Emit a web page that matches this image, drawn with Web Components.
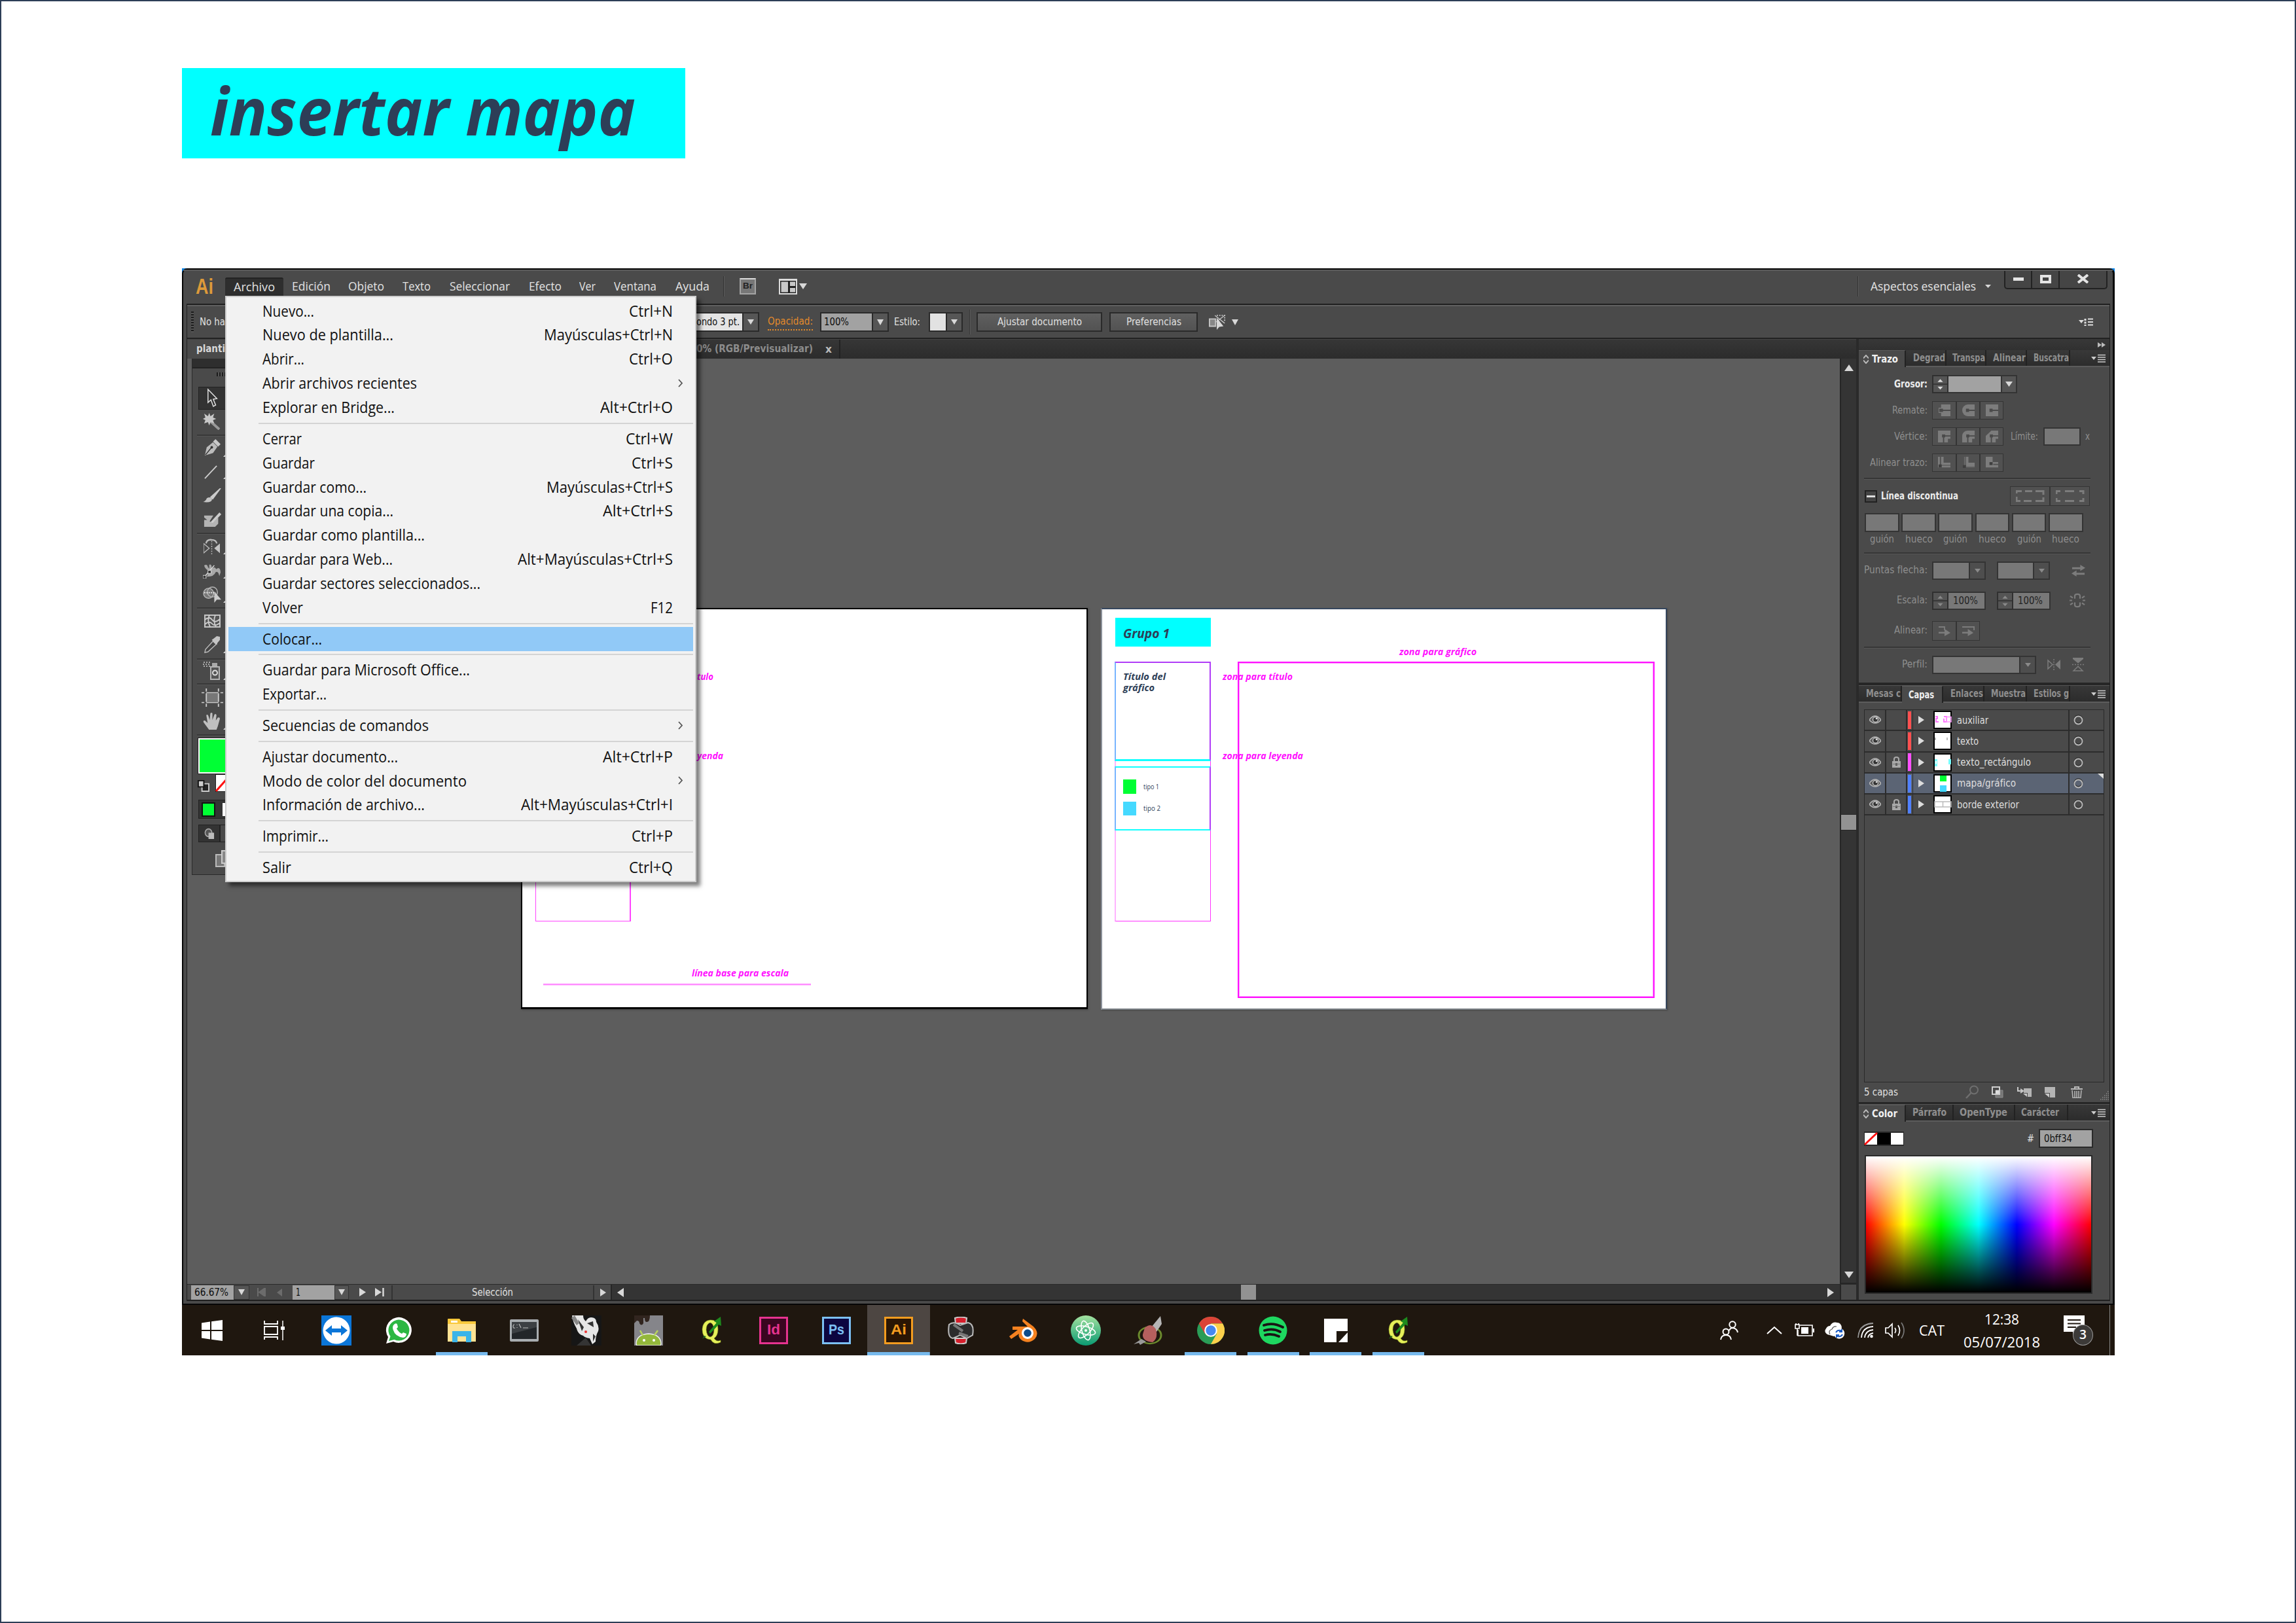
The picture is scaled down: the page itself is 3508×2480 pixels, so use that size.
<!DOCTYPE html>
<html lang="es">
<head>
<meta charset="utf-8">
<title>insertar mapa</title>
<style>
html,body{margin:0;padding:0;background:#fff}
body{width:3508px;height:2480px;overflow:hidden;font-family:"DejaVu Sans","Liberation Sans",sans-serif}
</style>
</head>
<body>
<page-sheet></page-sheet>
<script>
const def=(name,css,html,after)=>customElements.define(name,class extends HTMLElement{
  constructor(){super();this.attachShadow({mode:'open'});}
  connectedCallback(){
    if(this.done)return;this.done=true;
    this.shadowRoot.innerHTML='<style>*{box-sizing:border-box}:host{box-sizing:border-box;display:block}'+css+'</style>'+(typeof html==='function'?html(this):html);
    if(after)after(this);
  }
});

/* One line of text, condensed or expanded to the width in "w". */
def('t-x',':host{display:inline-block;white-space:pre;line-height:1.2;flex:none}span{display:inline-block;transform-origin:0 50%}','<span><slot></slot></span>',el=>{
  const w=+el.getAttribute('w'),s=el.shadowRoot.querySelector('span');
  if(el.hasAttribute('s'))el.style.fontSize=el.getAttribute('s')+'px';
  if(w){const m=s.getBoundingClientRect().width;if(m){el.style.width=w+'px';s.style.transform='scaleX('+(w/m)+')';}}
});

const dn='<path d="M0 0H12L6 9Z" fill="#d8d8d8"/>';
const I={
down:['0 0 12 9',dn],downdim:['0 0 12 9','<path d="M0 0H12L6 9Z" fill="#8a8a8a"/>'],
up:['0 0 14 10','<path d="M0 10H14L7 0Z" fill="#d8d8d8"/>'],
right:['0 0 10 14','<path d="M0 0V14L10 7Z" fill="#d8d8d8"/>'],
left:['0 0 10 14','<path d="M10 0V14L0 7Z" fill="#d8d8d8"/>'],
leftdim:['0 0 10 14','<path d="M10 0V14L0 7Z" fill="#6c6c6c"/>'],
first:['0 0 14 14','<path d="M2 0V14M13 0V14L4 7Z" stroke="#6c6c6c" stroke-width="2" fill="#6c6c6c"/>'],
last:['0 0 14 14','<path d="M12.500 0V14" stroke="#d8d8d8" stroke-width="2.500"/><path d="M0 0V14L10 7Z" fill="#d8d8d8"/>'],
layout:['0 0 28 24','<path d="M0 0H28V24H0Z" fill="#dcdcdc"/><path d="M2 3H26V22H2Z" fill="#222"/><path d="M3.500 4.500H14V20.500H3.500ZM17 4.500H25V11H17ZM17 14H25V20.500H17Z" fill="#c8c8c8"/>'],
snap:['0 0 28 25','<path d="M1 7H11V19H1Z" fill="#888" stroke="#c4c4c4" stroke-width="2"/><path d="M13 1H26V11" fill="none" stroke="#c4c4c4" stroke-width="2" stroke-dasharray="2 2"/><path d="M10 1L26 14M26 1L12 12" stroke="#c4c4c4" stroke-width="1.500"/><path d="M13 5V25L17 20L24 19Z" fill="#d8d8d8"/>'],
optm:['0 0 22 12','<path d="M0 3H8L4 8Z" fill="#ddd"/><path d="M10 1V12" stroke="#ddd" stroke-width="3" stroke-dasharray="3 1.500"/><path d="M14 1.500H22M14 6H22M14 10.500H22" stroke="#ddd" stroke-width="2"/>'],
menu:['0 0 22 13','<path d="M0 4H8L4 9Z" fill="#ccc"/><path d="M10 1.500H22M10 5H22M10 8.500H22M10 12H22" stroke="#ccc" stroke-width="1.500"/>'],
ffwd:['0 0 12 8','<path d="M0 0V8L6 4ZM6 0V8L12 4Z" fill="#bbb"/>'],
updn:['0 0 9 14','<path d="M0 5.500L4.500 1L9 5.500M0 8.500L4.500 13L9 8.500" fill="none" stroke="#bbb" stroke-width="2"/>'],
step:['0 0 23 26','<path d="M0 13H23" stroke="#2c2c2c" stroke-width="1.500"/><path d="M7 9.500H16L11.500 4.500ZM7 17H16L11.500 22Z" fill="#dcdcdc"/>'],
stepd:['0 0 23 26','<path d="M0 13H23" stroke="#2c2c2c" stroke-width="1.500"/><path d="M7 9.500H16L11.500 4.500ZM7 17H16L11.500 22Z" fill="#8a8a8a"/>'],
cap1:['0 0 20 18','<path d="M5 0H20V18H5V13H1V5H5Z" fill="#7c7c7c"/><path d="M3 9H20" stroke="#4a4a4a" stroke-width="2"/><path d="M2 6.500H8V11.500H2Z" fill="#4a4a4a"/>'],
cap2:['0 0 20 18','<path d="M9 0H20V18H9A9 9 0 0 1 9 0Z" fill="#7c7c7c"/><path d="M9 9H20" stroke="#4a4a4a" stroke-width="2"/><path d="M6 6.500H11V11.500H6Z" fill="#4a4a4a"/>'],
cap3:['0 0 20 18','<path d="M0 0H20V18H0Z" fill="#7c7c7c"/><path d="M9 9H20" stroke="#4a4a4a" stroke-width="2"/><path d="M6 6.500H11V11.500H6Z" fill="#4a4a4a"/>'],
ver1:['0 0 20 20','<path d="M0 0H20V14H16V20H0Z" fill="#7c7c7c"/><path d="M9 20V9H20" fill="none" stroke="#4a4a4a" stroke-width="2"/><path d="M6.500 6.500H11.500V11.500H6.500Z" fill="#4a4a4a"/>'],
ver2:['0 0 20 20','<path d="M9 0H20V14H16V20H0V9A9 9 0 0 1 9 0Z" fill="#7c7c7c"/><path d="M9 20V9H20" fill="none" stroke="#4a4a4a" stroke-width="2"/><path d="M6.500 6.500H11.500V11.500H6.500Z" fill="#4a4a4a"/>'],
ver3:['0 0 20 20','<path d="M9 0H20V14H16V20H0V9Z" fill="#7c7c7c"/><path d="M9 20V9H20" fill="none" stroke="#4a4a4a" stroke-width="2"/><path d="M6.500 6.500H11.500V11.500H6.500Z" fill="#4a4a4a"/>'],
ali1:['0 0 20 20','<path d="M0 0H3V15H20V18H0ZM5 0H9V10H20V14H5Z" fill="#7c7c7c"/><path d="M1 13H6V18H1Z" fill="#3f3f3f"/>'],
ali2:['0 0 20 20','<path d="M6 0H10V10H20V17H6Z" fill="#7c7c7c"/><path d="M4 0V17H20" fill="none" stroke="#6a6a6a" stroke-width="2"/><path d="M1 14H6V19H1Z" fill="#3f3f3f"/>'],
ali3:['0 0 20 20','<path d="M0 0H11V9H20V12H12V14H20V18H0Z" fill="#7c7c7c"/><path d="M6 9H11V14H6Z" fill="#3f3f3f"/>'],
dash1:['0 0 44 18','<path d="M9 1.500H1V5M1 10V16.500H7M14 1.500H25M30 1.500H42V7M42 11V16.500H30M12 16.500H24" fill="none" stroke="#7c7c7c" stroke-width="3"/>'],
dash2:['0 0 44 18','<path d="M7 1.500H1V6M1 12V16.500H7M14 1.500H28M36 1.500H42V6M42 12V16.500H36M14 16.500H28" fill="none" stroke="#7c7c7c" stroke-width="3"/>'],
swap:['0 0 22 19','<path d="M1 4H14V0L22 5L14 10V7H1ZM21 13H8V9L0 14L8 19V16H21Z" fill="#7c7c7c"/>'],
link:['0 0 24 24','<path d="M8 9V5Q8 2 12 2Q16 2 16 5V9M8 15V19Q8 22 12 22Q16 22 16 19V15M1 5L5 8M0 12H4M1 19L5 16M23 5L19 8M24 12H20M23 19L19 16" fill="none" stroke="#7c7c7c" stroke-width="2.200"/>'],
ar1:['0 0 20 16','<path d="M0 2H10V7" fill="none" stroke="#7c7c7c" stroke-width="2"/><path d="M0 9.500H10V5L20 11L10 16V12H0Z" fill="#7c7c7c"/>'],
ar2:['0 0 20 16','<path d="M0 2H19V7" fill="none" stroke="#7c7c7c" stroke-width="2"/><path d="M0 9.500H9V5L18 11L9 16V12H0Z" fill="#7c7c7c"/>'],
flh:['0 0 20 18','<path d="M1 2V16L8 9Z" fill="none" stroke="#7c7c7c" stroke-width="1.500"/><path d="M10 0V18" stroke="#7c7c7c" stroke-width="1.500" stroke-dasharray="2 2"/><path d="M20 1V17L12 9Z" fill="#7c7c7c"/>'],
flv:['0 0 18 22','<path d="M1 0H17V2L9 9L1 2Z" fill="#7c7c7c"/><path d="M0 11H18" stroke="#7c7c7c" stroke-width="1.500" stroke-dasharray="2 2"/><path d="M2 21H16L9 14Z" fill="none" stroke="#7c7c7c" stroke-width="1.500"/>'],
eye:['0 0 18 14','<path d="M0 8Q9 -4 18 8Q9 18 0 8Z" fill="#5a5a5a" stroke="#b4b4b4" stroke-width="1.600"/><circle cx="9.500" cy="7.500" r="4" fill="#333" stroke="#c4c4c4" stroke-width="1.400"/><circle cx="11" cy="6" r="1.300" fill="#ddd"/>'],
lock:['0 0 13 17','<path d="M3 8V4Q3 1 6.500 1Q10 1 10 4V8" fill="none" stroke="#aaa" stroke-width="2"/><path d="M0 7H13V17H0Z" fill="#a8a8a8"/><path d="M5 10H8V14H5Z" fill="#555"/><path d="M1 11.500H12" stroke="#777"/>'],
tri:['0 0 9 12','<path d="M0 0V12L9 6Z" fill="#dcdcdc"/>'],
ring:['0 0 15 16','<circle cx="7.500" cy="7.300" r="6" fill="none" stroke="#2c2c2c" stroke-width="2"/><circle cx="7.500" cy="8.500" r="6" fill="none" stroke="#b8b8b8" stroke-width="1.900"/>'],
find:['0 0 20 21','<circle cx="13" cy="7.500" r="6" fill="none" stroke="#6f6f6f" stroke-width="2"/><path d="M8.500 12L1 20" stroke="#6f6f6f" stroke-width="2.500"/>'],
mask:['0 0 18 18','<path d="M6 6H17V17H6Z" fill="#777" stroke="#8c8c8c"/><path d="M1 1H12V12H1Z" fill="none" stroke="#cfcfcf" stroke-width="2"/><path d="M6 6H11V11H6Z" fill="#ddd"/>'],
subl:['0 0 22 16','<path d="M1 0V6H8M5 3L9 6L5 9" fill="none" stroke="#c8c8c8" stroke-width="2"/><path d="M10 2H22V15H16V9H10Z" fill="#b4b4b4"/><path d="M9 10L15 15V10Z" fill="#c8c8c8"/>'],
newl:['0 0 16 17','<path d="M0 1H16V17H8V10H0Z" fill="#b4b4b4"/><path d="M0 11H7V17Z" fill="#c8c8c8"/>'],
trash:['0 0 18 18','<path d="M0 4H18M6 3V1H12V3" fill="none" stroke="#b8b8b8" stroke-width="2"/><path d="M2 6L3 17.500H15L16 6M6 7V17M9 7V17M12 7V17" fill="none" stroke="#b8b8b8" stroke-width="1.500"/>'],
grip:['0 0 14 15','<path d="M1 14H14M4 11H14M7 8H14M10 5H14M12 2H14" stroke="#888" stroke-width="1.500" stroke-dasharray="1.500 1.500"/>'],
/* tools */
sel:['0 0 20 30','<path d="M2 2V22L7 18L11 28L15 26L11 17L17 16Z" fill="#333" stroke="#e4e4e4" stroke-width="1.600"/>'],
wand:['0 0 28 26','<path d="M11 12L26 25" stroke="#999" stroke-width="4"/><path d="M10 0L12 5L18 1L16 7L21 9L16 11L18 16L12 14L10 19L8 14L2 16L4 11L0 9L4 7L2 1L8 5Z" fill="#c9c9c9"/>'],
pen:['0 0 28 28','<path d="M2 26L5 13L15 5L22 12L15 22Z" fill="#bbb"/><path d="M15 4L19 0L27 8L23 12Z" fill="#c9c9c9"/><path d="M3 25L12 14" stroke="#333" stroke-width="1.500"/><circle cx="13" cy="13" r="2" fill="#333"/>'],
line:['0 0 22 22','<path d="M1 21L20 1" stroke="#ccc" stroke-width="2"/>'],
brush:['0 0 28 24','<path d="M12 14L27 0L15 17Z" fill="#ccc" stroke="#ccc" stroke-width="1.500"/><path d="M0 22Q4 21 6 16Q11 13 14 17Q14 24 0 22Z" fill="#c4c4c4"/>'],
blob:['0 0 30 24','<path d="M1 5H16L10 14L14 17L24 8V18L19 23H1V12H6L1 8Z" fill="#b4b4b4"/><path d="M11 16L26 0L29 3L15 17Z" fill="#ccc"/>'],
refl:['0 0 26 26','<path d="M0 8V24L9 16Z" fill="none" stroke="#bbb" stroke-width="1.500"/><path d="M26 8V24L17 16Z" fill="#c4c4c4"/><path d="M13 4V26" stroke="#bbb" stroke-width="1.500" stroke-dasharray="2 2"/><path d="M4 8Q5 1 13 2Q20 2 21 8" fill="none" stroke="#bbb" stroke-width="2.500"/>'],
pup:['0 0 30 24','<path d="M2 3Q7 0 8 6L10 8V2Q14 0 14 8Q19 4 21 9Q27 4 28 14L26 20Q24 11 20 14Q18 21 6 21Q9 16 8 11Q3 8 2 3Z" fill="#a8a8a8"/><path d="M2 22L18 3" stroke="#ddd" stroke-width="1.500"/><path d="M8 11H13V16H8ZM0 19H5V24H0Z" fill="#333" stroke="#ddd"/>'],
shp:['0 0 30 26','<circle cx="9" cy="11" r="8" fill="#777" stroke="#b4b4b4" stroke-width="1.500"/><circle cx="15" cy="9" r="8" fill="none" stroke="#b4b4b4" stroke-width="1.500"/><path d="M2 10H20" stroke="#eee" stroke-width="2" stroke-dasharray="2 1.500"/><path d="M18 8V26L22 21H29Z" fill="#ccc"/>'],
mesh:['0 0 25 20','<path d="M1 1H24V19H1Z" fill="#555" stroke="#c4c4c4" stroke-width="2"/><path d="M1 8Q8 2 12 8T24 7M1 15Q8 9 12 14T24 13M8 1Q4 9 9 19M17 1Q13 10 18 19" fill="none" stroke="#ccc" stroke-width="1.800"/>'],
drop:['0 0 26 27','<path d="M14 8L19 13L6 25L1 26L2 21Z" fill="#444" stroke="#bbb" stroke-width="1.500"/><path d="M12 6L15 4L20 0L25 1L25 6L21 11L20 14Z" fill="#c4c4c4"/>'],
spray:['0 0 26 28','<path d="M12 8H25V27H12Z" fill="#555" stroke="#b4b4b4" stroke-width="2"/><path d="M14 2H22V7H14Z" fill="#aaa"/><circle cx="18.500" cy="17" r="3.500" fill="none" stroke="#ddd" stroke-width="2"/><path d="M1 1H12M0 4H12M1 7H11" stroke="#ccc" stroke-width="1.500" stroke-dasharray="2 2"/>'],
artb:['0 0 32 30','<path d="M7 8H25V22H7Z" fill="#777"/><path d="M7 0V5M7 8V22M7 25V30M25 0V5M25 8V22M25 25V30M0 7H4M7 7H25M28 7H32M0 23H4M7 23H25M28 23H32" stroke="#ccc" stroke-width="1.800"/>'],
hand:['0 0 26 28','<path d="M9 28L1 16Q0 12 3 13L7 17L5 4Q7 2 8 5L10 12L11 1Q13 -1 14 1V12L17 3Q19 1 20 4L19 13L22 8Q25 7 25 10L22 22L20 28Z" fill="#c0c0c0"/>'],
defs:['0 0 20 20','<path d="M8 7H19V19H8Z" fill="#222" stroke="#ccc" stroke-width="2"/><path d="M2 2H11V12H2Z" fill="#ccc" stroke="#111" stroke-width="2"/>'],
mode:['0 0 17 16','<circle cx="7" cy="7" r="5.500" fill="#555" stroke="#aaa" stroke-width="1.600"/><path d="M7 7H16V16H7Z" fill="#bbb"/>'],
scr:['0 0 22 26','<path d="M1 7H14V25H1Z" fill="#777" stroke="#bbb" stroke-width="2"/><path d="M10 1H22V20H10Z" fill="#888" stroke="#ccc" stroke-width="2"/>'],
/* taskbar */
win:['0 0 32 32','<path d="M0 4.500L13 2.500V15H0ZM15 2.200L32 0V15H15ZM0 17H13V29.500L0 27.500ZM15 17H32V32L15 29.800Z" fill="#fff"/>'],
tv:['0 0 32 30','<path d="M1 0V5H21V0M1 29V25H21V29M1 9H21V21H1Z" fill="none" stroke="#fff" stroke-width="1.800"/><path d="M29 0V30" stroke="#fff" stroke-width="1.500"/><path d="M26 9H32V14H26Z" fill="#fff"/>'],
team:['0 0 46 46','<path d="M0 0H46V46H0Z" fill="#0b76d8"/><circle cx="23" cy="23" r="20.500" fill="#fff"/><path d="M6 23L16 15V20H30V15L40 23L30 31V26H16V31Z" fill="#0b76d8"/>'],
wa:['0 0 42 42','<path d="M1 41L4 31A19.500 19.500 0 1 1 12 38Z" fill="#fff"/><path d="M5 37L7.500 30A16 16 0 1 1 13.500 35Z" fill="#2cb742"/><path d="M14 11Q17 9 18 12L19 16L17 18Q20 24 25 26L27 24L32 26Q32 31 27 32Q13 30 11 17Q11 13 14 11Z" fill="#fff"/>'],
fold:['0 0 43 36','<path d="M0 1Q0 0 1 0H18L21 4H43V35H0Z" fill="#f9c83c"/><path d="M0 8H43V35H0Z" fill="#ffe394"/><path d="M5 3H15V6H5Z" fill="#fff"/><path d="M7 36V19H36V36H28V27H15V36Z" fill="#3cb4e8"/>'],
cmd:['0 0 44 34','<rect width="44" height="34" rx="2" fill="#a8adb0"/><path d="M3 4H41V30H3Z" fill="#222629"/><path d="M3 4H41V12L3 22Z" fill="#3c4043"/><path d="M7 8Q5 8 5 11Q5 14 8 13M11 8V9M11 12V13M14 7L17 13M20 13H28" stroke="#bbb" fill="none" stroke-width="1.200"/>'],
rhino:['0 0 46 46','<path d="M0 0H46V46H0Z" fill="#161616"/><path d="M1 0H18Q18 6 22 9Q25 3 30 3Q38 3 38 10Q43 17 41 24Q37 31 37 40L32 44L28 35Q21 34 18 31Q10 29 8 20Q2 10 1 0Z" fill="#e6e6e6"/><path d="M10 6L19 18L16 24ZM24 12L33 9L34 18ZM33 28L37 32L33 40Z" fill="#333"/><path d="M5 0L12 12L8 15L0 4Z" fill="#888"/><circle cx="22" cy="25" r="2" fill="#e33"/><path d="M8 46L22 34L30 46Z" fill="#343434"/>'],
droid:['0 0 44 46','<path d="M0 0H44V46H0Z" fill="#85858a"/><path d="M0 0H24Q24 10 19 10Q16 10 16 4H14V12Q11 17 8 12Q8 8 4 8L0 12Z" fill="#31251f"/><path d="M3 44Q3 29 22 28Q41 29 41 44L40 46H4Z" fill="#94b83b" stroke="#eee" stroke-width="1.500"/><path d="M13 30L9 23M31 30L36 23" stroke="#b6d35a" stroke-width="2.500"/><circle cx="15" cy="38" r="2" fill="#fff"/><circle cx="30" cy="38" r="2" fill="#fff"/>'],
qgis:['0 0 38 42','<path d="M17 5Q29 4 29 19Q29 29 23 33Q27 39 33 36L33 39Q23 44 18 35Q5 34 5 19Q6 6 17 5ZM17 9Q11 11 11 20Q12 30 17 31Q23 30 23 19Q22 10 17 9Z" fill="#e6f05a" fill-rule="evenodd" stroke="#8a9a20" stroke-width=".6"/><path d="M33 0L34 14L30 12L17 26L15 23L27 9L23 7Z" fill="#1d8a1d"/><path d="M11 30L5 34L8 29Z" fill="#1d6a1d"/>'],
nx:['0 0 42 42','<path d="M12 2Q21 -1 30 2L29 10H13ZM12 33H30L29 40Q21 43 13 40Z" fill="#d61f2c" stroke="#ccc" stroke-width="2"/><path d="M3 12Q10 6 20 13L32 9Q42 11 39 28L30 33L20 28L9 33Q0 32 3 12Z" fill="#2c2c2c" stroke="#bbb" stroke-width="2"/><path d="M10 12L24 22M18 25L32 30" stroke="#777" stroke-width="4"/>'],
blend:['0 0 44 38','<path d="M21 1L37 13Q47 23 39 32Q29 41 18 33Q13 28 15 24L3 32L0 28L13 18H5V13H20L28 13L20 5Z" fill="#f58220"/><circle cx="28" cy="23" r="9" fill="#fff"/><circle cx="28" cy="23" r="5.800" fill="#0b4c8c"/>'],
atom:['0 0 46 46','<defs><linearGradient id="g" x2="0" y2="1"><stop stop-color="#a4e2a0"/><stop offset="1" stop-color="#0a9b72"/></linearGradient></defs><circle cx="23" cy="23" r="23" fill="url(#g)"/><g fill="none" stroke="#fff" stroke-width="1.600"><ellipse cx="23" cy="23" rx="15" ry="6" transform="rotate(15 23 23)"/><ellipse cx="23" cy="23" rx="15" ry="6" transform="rotate(75 23 23)"/><ellipse cx="23" cy="23" rx="15" ry="6" transform="rotate(135 23 23)"/></g><circle cx="23" cy="23" r="2" fill="#fff"/>'],
bird:['0 0 46 44','<circle cx="25" cy="29" r="17" fill="none" stroke="#6b8a2d" stroke-width="3" transform="scale(1 .75) translate(0 10)"/><path d="M41 0L43 12L35 24L27 17Z" fill="#b5b5b5"/><path d="M17 18Q27 9 34 20Q38 34 29 40Q13 38 14 28Z" fill="#b5605e"/><path d="M0 43L12 35L19 39L10 44L8 41Z" fill="#999"/>'],
chrome:['0 0 42 42','<circle cx="21" cy="21" r="21" fill="#2a9d57"/><path d="M2.800 10.500A21 21 0 0 1 39.200 10.500H21L12 26Z" fill="#db4437"/><path d="M39.200 10.500A21 21 0 0 1 21 42L30 26L21 10.500Z" fill="#fcd04b"/><circle cx="21" cy="21" r="9.800" fill="#fff"/><circle cx="21" cy="21" r="7.700" fill="#4688f1"/>'],
spot:['0 0 44 44','<circle cx="22" cy="22" r="21.500" fill="#1ed760"/><path d="M8 14Q22 9 37 17M9 22Q22 18 33 24M10 29Q20 26 31 31" fill="none" stroke="#191414" stroke-width="3.800" stroke-linecap="round"/>'],
note:['0 0 36 36','<path d="M0 0H36V19H19V36H0Z" fill="#fff"/><path d="M22 36L36 21V36Z" fill="#fff"/>'],
ppl:['0 0 28 30','<g fill="none" stroke="#fff" stroke-width="2"><circle cx="9" cy="17" r="4.500"/><path d="M1 29Q2 22 9 22T17 29"/><circle cx="19" cy="6" r="4.700"/><path d="M14 15Q16 11 19 11Q26 12 27 18"/></g>'],
chev:['0 0 24 13','<path d="M1 12L12 2L23 12" fill="none" stroke="#fff" stroke-width="2"/>'],
batt:['0 0 30 21','<path d="M8 3H27V19H5V10" fill="none" stroke="#fff" stroke-width="1.600"/><path d="M10 6H21V16H10Z" fill="#fff"/><path d="M28 8H30V14H28Z" fill="#fff"/><path d="M1 2H7V8H1ZM2 0V3M6 0V3M4 8V19" stroke="#fff" stroke-width="1.600" fill="none"/>'],
cloud:['0 0 32 26','<path d="M4 19Q-2 15 2 10Q4 6 8 6Q12 -1 19 1Q25 1 26 9L14 22Z" fill="#fff"/><path d="M8 19Q5 13 11 11Q13 6 18 7" fill="none" stroke="#555" stroke-width="1.200"/><circle cx="22" cy="17.500" r="8.200" fill="#fff"/><path d="M17 16Q19 12 24 13L26 15M27 19Q25 23 20 22L18 20M26 11V15H22M18 24V20H22" fill="none" stroke="#1b5cc4" stroke-width="2"/>'],
wifi:['0 0 25 24','<g fill="none" stroke="#fff" stroke-width="1.800"><path d="M1 23Q2 2 24 1" stroke="#999"/><path d="M6 23Q7 7 24 6"/><path d="M11 23Q12 12 24 11"/><path d="M16 23Q17 17 24 16"/></g><circle cx="21.500" cy="21" r="2.300" fill="#fff"/>'],
vol:['0 0 30 26','<path d="M1 9H5L11 3V23L5 17H1Z" fill="none" stroke="#fff" stroke-width="1.700"/><path d="M15 9Q18 13 15 17M20 5Q25 13 20 21" fill="none" stroke="#fff" stroke-width="1.700"/><path d="M25 1Q33 13 25 25" fill="none" stroke="#777" stroke-width="1.700"/>'],
noti:['0 0 32 30','<path d="M0 0H32V25H19L14 30V25H0Z" fill="#fff"/><path d="M6 7H26M6 12.500H26M6 18H19" stroke="#1f170f" stroke-width="2"/>']
};
def('i-c',':host{display:inline-flex;flex:none}svg{display:block}',el=>{
  const n=el.getAttribute('n'),d=I[n],v=d[0].split(' ');
  const w=el.getAttribute('w')||v[2],h=el.getAttribute('h')||v[3];
  return `<svg width="${w}" height="${h}" viewBox="${d[0]}" preserveAspectRatio="none">${d[1]}</svg>`;
});

/* ---------- menu bar ---------- */
const gap=n=>`<div style="width:${n}px;flex:none"></div>`;
const menus=[['Edición',446,505],['Objeto',532,587],['Texto',615,658],['Seleccionar',687,779],['Efecto',808,858],['Ver',885,910],['Ventana',938,1003],['Ayuda',1032,1084]];
def('menu-bar',`:host{display:flex;height:52px;align-items:center;color:#e2e2e2;font:19px "Open Sans","Noto Sans",sans-serif;border-top:2px solid #5c5c5c;padding-bottom:3px}
.ai{color:#dd9a3a;font:bold 33px "Liberation Sans",sans-serif;margin-left:19px}
.on{margin:3px 13px 0 18px;width:89px;height:30px;background:#2e2e2e;border-top:2px solid #222;border-radius:3px 3px 0 0;display:flex;justify-content:center;align-items:center;padding-bottom:3px}
.sep{width:2px;height:31px;background:#333;border-right:1px solid #5c5c5c}
.br{width:25px;height:25px;background:#777;border:2px solid #a4a4a4;border-top-color:#ddd;color:#222;font:bold 12px "Liberation Sans",sans-serif;display:flex;align-items:center;justify-content:center}
.btns{display:flex;align-self:flex-start;height:28px;border:2px solid #222;border-top:0;border-radius:0 0 5px 5px;background:#454545}
.btns div{display:flex;align-items:center;justify-content:center;border-right:2px solid #222;padding-bottom:2px}`,
()=>{let x=446,h='<t-x class="ai" w="27">Ai</t-x><div class="on"><t-x w="63">Archivo</t-x></div>';
 menus.forEach(([t,a,b])=>{h+=gap(a-x)+`<t-x w="${b-a}">${t}</t-x>`;x=b;});
 return h+gap(21)+'<div class="sep"></div>'+gap(23)+'<div class="br"><t-x w="15">Br</t-x></div>'+gap(35)+'<i-c n="layout"></i-c>'+gap(3)+'<i-c n="down" w="12" h="9"></i-c><div style="flex:1"></div><div class="sep"></div>'+gap(18)+'<t-x w="161" s="18">Aspectos esenciales</t-x>'+gap(14)+'<i-c n="down" w="9" h="5"></i-c>'+gap(20)+'<div class="btns"><div style="width:41px"><svg width="16" height="5"><path d="M0 0H16V5H0Z" fill="#e4e4e4"/></svg></div><div style="width:42px"><svg width="17" height="13"><path d="M2 2H15V11H2Z" fill="none" stroke="#e4e4e4" stroke-width="4"/></svg></div><div style="width:71px;border:0"><svg width="17" height="14"><path d="M1 1L16 13M16 1L1 13" stroke="#e4e4e4" stroke-width="4"/></svg></div></div>'+gap(8);});

/* ---------- control bar ---------- */
def('control-bar',`:host{display:flex;flex:none;height:50px;align-items:center;font-size:16px;color:#e0e0e0;border-top:2px solid #606060;background:#4a4a4a}
.grip{width:4px;height:32px;background:repeating-linear-gradient(#1c1c1c 0 2px,#555 2px 4px)}
.f{height:30px;border:2px solid #2a2a2a;display:flex;align-items:center;color:#0c0c0c;padding-left:4px;overflow:hidden}
.d{height:30px;border:2px solid #2a2a2a;border-left:0;background:#565656;display:flex;align-items:center;justify-content:center}
.b{height:30px;border:2px solid #2a2a2a;background:linear-gradient(#606060,#525252);display:flex;align-items:center;justify-content:center}
.op{color:#e48a2a;height:26px;margin-top:-4px;border-bottom:2px dotted #e48a2a;margin-bottom:-4px;display:flex;align-items:center}
.s{width:2px;height:38px;background:#383838;border-right:1px solid #5a5a5a}`,
gap(6)+'<div class="grip"></div>'+gap(9)+'<t-x w="39">No ha</t-x>'+gap(720)+'<div class="f" style="width:72px;background:#e4e4e4;padding:0;border-left:0"><t-x w="66">ondo 3 pt.</t-x></div><div class="d" style="width:24px"><i-c n="down" w="10" h="8"></i-c></div>'+gap(13)+'<div class="op"><t-x w="69">Opacidad:</t-x></div>'+gap(11)+'<div class="f" style="width:81px;background:#a2a2a2"><t-x w="38">100%</t-x></div><div class="d" style="width:24px"><i-c n="down" w="10" h="9"></i-c></div>'+gap(8)+'<t-x w="40">Estilo:</t-x>'+gap(13)+'<div class="f" style="width:28px;background:#e2e2e2"></div><div class="d" style="width:24px"><i-c n="down" w="10" h="8"></i-c></div>'+gap(10)+'<div class="s"></div>'+gap(9)+'<div class="b" style="width:192px"><t-x w="129">Ajustar documento</t-x></div>'+gap(11)+'<div class="b" style="width:135px"><t-x w="84">Preferencias</t-x></div>'+gap(17)+'<i-c n="snap" w="26" h="23"></i-c>'+gap(9)+'<i-c n="down" w="10" h="9"></i-c><div style="flex:1"></div><i-c n="optm"></i-c>'+gap(25));

/* ---------- document tabs ---------- */
def('doc-tabs',`:host{display:flex;flex:none;height:30px;align-items:center;background:linear-gradient(#363636,#2c2c2c);font-weight:bold;font-size:15.500px;color:#8c8c8c;border-top:1px solid #444}
.a{width:70px;height:29px;background:#4a4a4a;color:#d8d8d8;display:flex;align-items:center;padding-left:14px}
.e{width:2px;height:29px;background:#222}`,
'<div class="a"><t-x w="44">planti</t-x></div>'+gap(708)+'<t-x w="178">0% (RGB/Previsualizar)</t-x>'+gap(19)+'<t-x w="10" style="color:#bbb" s="16">x</t-x>'+gap(11)+'<div class="e"></div>');

/* ---------- artboards ---------- */
def('art-object',':host{position:absolute}','<slot></slot>',el=>{const[x,y,w,h]=el.getAttribute('r').split(',');el.style.left=x+'px';el.style.top=y+'px';if(w)el.style.width=w+'px';if(h)el.style.height=h+'px';});
/* a line of text on an artboard, centred on cy */
const at=(x,cy,w,s,t,c,f)=>`<art-object r="${x},${cy-s*.6}" style="font:${f||'italic bold'} ${s}px 'Open Sans','Noto Sans',sans-serif;color:${c||'#ff11ff'}"><t-x w="${w}">${t}</t-x></art-object>`;
const box=(x,y,x2,y2,st)=>`<art-object r="${x},${y},${x2-x},${y2-y}" style="${st}"></art-object>`;
def('canvas-area',`:host{position:relative;flex:1;background:#5d5d5d;overflow:hidden}`,
()=>{const X=v=>v-286,Y=v=>v-548;const T=(x,y,w,s,t,c,f)=>at(X(x),Y(y),w,s,t,c,f),B=(a,b,c,d,s)=>box(X(a),Y(b),X(c),Y(d),s);
return B(796,929,1662,1542,'background:#fff;border:2px solid #000;border-bottom-width:3px;box-shadow:1px 1px 3px #444')+
B(818,1300,964,1408,'border:2px solid #ff66ff;border-top:0;border-bottom-width:1px;border-left-width:1px;border-color:#ff44ff')+
T(1065,1032,25,14,'tulo')+T(1065,1153,40,14,'yenda')+T(1057,1485,148,14,'línea base para escala')+
B(830,1503,1239,1506,'background:#ff8cff;border-bottom:1px solid #ffc8ff')+
B(1682,929,2547,1543,'background:#fff;border:2px solid #36475e;border-left-color:#8a9098;border-bottom-color:#7c8288;box-shadow:1px 1px 2px #444')+
B(1704,944,1850,988,'background:#0ff')+T(1716,966,71,19,'Grupo 1','#2d3e57')+
B(1703,1011,1850,1408,'border:1px solid #ff33ff;border-left:2px solid #ffb4ff')+
B(1703,1011,1850,1163,'border:2px solid #b03cf8;border-left-color:#78b4ff;border-bottom:3px solid #1ff')+
B(1703,1171,1850,1269,'border:2px solid #1ff;border-right-color:#b03cf8;border-left-color:#78b4ff')+
T(1716,1032,65,14,'Título del','#2d3e57')+T(1716,1049,48,14,'gráfico','#2d3e57')+
B(1716,1191,1736,1213,'background:#00ff34')+B(1716,1225,1736,1246,'background:#45d9ff')+
T(1747,1201,24,11,'tipo 1','#2d3e57','normal')+T(1747,1234,26,11,'tipo 2','#2d3e57','normal')+
T(2138,994,118,14,'zona para gráfico')+
B(1891,1011,2528,1525,'border:2px solid #ff11ff;box-shadow:inset 0 0 0 1px #ff99ff')+
T(1868,1032,107,14,'zona para título')+T(1868,1153,123,14,'zona para leyenda')+
'<tools-panel></tools-panel>';});

/* ---------- tools ---------- */
const tools=[['sel',592,316,18,28],['wand',630,310,27,26],['pen',670,311,27,27],['line',710,312,21,21],['brush',745,310,28,23],['blob',782,311,28,23],['refl',822,311,25,24],['pup',860,310,29,23],['shp',895,310,29,25],['mesh',938,312,25,20],['drop',971,312,25,26],['spray',1010,310,26,28],['artb',1051,308,33,28],['hand',1088,310,27,26]];
const flyouts=['pen','line','refl','pup','shp','drop','spray','hand'];
def('tools-panel',`:host{position:absolute;left:7px;top:-5px;width:70px;height:794px;background:#4a4a4a;border:1px solid #2a2a2a;border-top:3px solid #3c3c3c}
.h{height:17px;background:#2e2e2e;border-bottom:2px solid #222}.g{margin:6px 0 0 37px;width:20px;height:6px;background:repeating-linear-gradient(90deg,#1c1c1c 0 2px,#555 2px 4px)}
.t{display:flex;align-items:flex-end}.t.on{background:#333;border:1px solid #222}
.s{height:3px;background:#383838;border-bottom:1px solid #555;margin-left:7px}
.row{display:flex}`,
()=>{let y=574,h='<div class="h"></div><div class="g"></div>';const sp=n=>{h+=`<div style="height:${n-y}px"></div>`;y=n;};
const seps=[[663,'pen'],[813,'refl'],[927,'mesh'],[1005,'spray'],[1043,'artb']];
tools.forEach(([n,ty,x,w,hh])=>{const s=seps.find(q=>q[1]===n);if(s){sp(s[0]);h+='<div class="s"></div>';y+=3;}
 if(n==='sel'){sp(590);h+=`<div class="t on" style="margin-left:9px;padding:0 0 2px 12px;height:35px"><i-c n="sel" w="18" h="30"></i-c></div>`;y+=35;}
 else{sp(ty);h+=`<div class="t" style="padding-left:${x-294}px;height:${hh}px"><i-c n="${n}" w="${w}" h="${hh}"></i-c>${flyouts.includes(n)?`<svg width="5" height="5" style="margin-left:${341-x-w}px;flex:none"><path d="M5 0V5H0Z" fill="#ddd"/></svg>`:''}</div>`;y+=hh;}});
sp(1121);h+='<div class="s"></div>';y+=3;sp(1127);
h+='<div style="margin-left:9px;height:54px;background:#00ff34;border:2px solid #fff;outline:1px solid #222"></div>';y+=54;
h+='<div class="row" style="height:28px;padding-left:7px;align-items:end"><i-c n="defs" w="19" h="19"></i-c><svg width="32" height="27" style="margin-left:9px"><path d="M0 0H30V27H0Z" fill="#fff" stroke="#222" stroke-width="2"/><path d="M1 26L24 0" stroke="#f11" stroke-width="3"/></svg></div>';y+=28;sp(1221);
h+='<div class="row" style="margin-left:9px;height:29px;background:#333;border:1px solid #222;padding:3px 0 0 4px"><svg width="40" height="22"><path d="M1 1H20V21H1Z" fill="#00ff34" stroke="#111" stroke-width="2"/><path d="M32 1H40V21H32Z" fill="#fff"/></svg></div>';y+=29;sp(1259);
h+='<div class="row" style="margin-left:9px;height:27px;background:linear-gradient(90deg,#333 31px,#222 31px 33px,#4a4a4a 33px);border:1px solid #222;padding:4px 0 0 8px"><i-c n="mode" w="16" h="17"></i-c></div>';y+=27;sp(1298);
h+='<div class="row" style="padding-left:35px"><i-c n="scr"></i-c></div>';
return h;});

/* ---------- file menu ---------- */
const items=[['Nuevo...',79,'Ctrl+N',67],['Nuevo de plantilla...',200,'Mayúsculas+Ctrl+N',197],['Abrir...',64,'Ctrl+O',67],['Abrir archivos recientes',236,'>'],['Explorar en Bridge...',202,'Alt+Ctrl+O',111],0,
['Cerrar',60,'Ctrl+W',72],['Guardar',80,'Ctrl+S',63],['Guardar como...',159,'Mayúsculas+Ctrl+S',193],['Guardar una copia...',200,'Alt+Ctrl+S',107],['Guardar como plantilla...',248],['Guardar para Web...',199,'Alt+Mayúsculas+Ctrl+S',237],['Guardar sectores seleccionados...',333],['Volver',62,'F12',34],0,
['Colocar...',91,'',0,1],0,['Guardar para Microsoft Office...',317],['Exportar...',98],0,['Secuencias de comandos',254,'>'],0,['Ajustar documento...',207,'Alt+Ctrl+P',107],['Modo de color del documento',312,'>'],['Información de archivo...',248,'Alt+Mayúsculas+Ctrl+I',232],0,['Imprimir...',101,'Ctrl+P',63],0,['Salir',44,'Ctrl+Q',67]];
def('menu-item',`:host{display:flex;height:36.900px;align-items:center;padding:0 31px 1px 52px;justify-content:space-between}:host([on]){background:#91c9f7}:host([sub]){padding-right:15px}`,'<slot></slot>');
def('file-menu',`:host{position:absolute;left:64px;top:40px;width:720px;height:896px;background:#f2f2f2;border:2px solid #ccc;padding:3px;font:24px "Open Sans","Noto Sans",sans-serif;color:#111;box-shadow:6px 6px 6px rgba(0,0,0,.5);z-index:5}
.s{height:10.800px;display:flex;align-items:center;padding-left:46px}.s i{height:2px;flex:1;background:#d4d4d4}`,
()=>items.map(m=>m?`<menu-item ${m[4]?'on':''} ${m[2]==='>'?'sub':''}><t-x w="${m[1]}">${m[0]}</t-x>${m[2]==='>'?'<svg width="9" height="13"><path d="M2 1L7 6.500L2 12" fill="none" stroke="#555" stroke-width="1.800"/></svg>':m[2]?`<t-x w="${m[3]}">${m[2]}</t-x>`:''}</menu-item>`:'<div class="s"><i></i></div>').join(''));

/* ---------- panels ---------- */
def('panel-tabs',`:host{display:flex;flex:none;height:26px;background:linear-gradient(#383838,#2c2c2c);font-weight:bold;font-size:16px;color:#8e8e8e;border-bottom:2px solid #5c5c5c}
div{display:flex;align-items:center;border-right:2px solid #222;height:24px;flex:none}
.on{background:#4a4a4a;color:#f0f0f0;height:26px;border-top:1px solid #5c5c5c}
i-c.m{margin:6px 6px 0 auto}`,
el=>JSON.parse(el.getAttribute('tabs')).map(([t,w,p,tw,on])=>`<div class="${on?'on':''}" style="width:${w}px;padding-left:${p}px">${on===2?'<i-c n="updn" w="8" h="14" style="margin-right:5px"></i-c>':''}<t-x w="${tw}">${t}</t-x></div>`).join('')+'<i-c class="m" n="menu"></i-c>');
const tabs=a=>`<panel-tabs tabs='${JSON.stringify(a)}'></panel-tabs>`;

const cmb=(w,b)=>`<div class="f" style="width:${w-b}px"></div><div class="d" style="width:${b}px"><i-c n="downdim" w="9" h="6"></i-c></div>`;
const bt=ns=>ns.map((n,i)=>`<div class="b" style="width:${i?36:37}px"><i-c n="${n}" w="19" h="18"></i-c></div>`).join('');
def('stroke-panel',`:host{height:482px;flex:none;background:#4a4a4a;color:#8e8e8e;font-size:15.500px}
.r{display:flex;align-items:center}.l{width:105px;margin-right:7px;display:flex;justify-content:flex-end}
.f{background:#787878;border:2px solid #343434;height:28px;display:flex;align-items:center;flex:none}
.d{background:#4e4e4e;border:2px solid #343434;border-left:0;height:28px;display:flex;align-items:center;justify-content:center;flex:none}
.b{background:#515151;border:1px solid #343434;height:28px;display:flex;align-items:center;justify-content:center;flex:none}
.st{width:25px;height:28px;border:2px solid #303030;background:#555;flex:none}
.hr{height:3px;margin:0 29px 0 8px;background:#363636;border-bottom:1px solid #575757}.w{color:#ececec;font-weight:bold}`,
()=>{const row=(mt,h,l,lw,c,w)=>`<div class="r" style="margin-top:${mt}px;height:${h}px"><div class="l ${w||''}"><t-x w="${lw}">${l}</t-x></div>${c}</div>`;
return '<div style="height:12px"></div>'+row(0,28,'Grosor:',51,'<div class="st"><i-c n="step" w="21" h="24"></i-c></div><div class="f" style="width:82px;background:#a2a2a2;border-left:0"></div><div class="d" style="width:23px;background:#555"><i-c n="down" w="11" h="8"></i-c></div>','w')+
row(12,28,'Remate:',54,bt(['cap1','cap2','cap3']))+
row(12,28,'Vértice:',51,bt(['ver1','ver2','ver3'])+gap(11)+'<t-x w="42">Límite:</t-x>'+gap(8)+'<div class="f" style="width:57px"></div>'+gap(7)+'<t-x w="7">x</t-x>')+
row(12,28,'Alinear trazo:',88,bt(['ali1','ali2','ali3']))+
'<div class="hr" style="margin-top:9px"></div><div class="r" style="margin-top:10px;height:30px">'+gap(9)+'<svg width="19" height="19"><path d="M1 1H18V18H1Z" fill="#444" stroke="#222" stroke-width="2"/><path d="M3 9.500H16" stroke="#ddd" stroke-width="3"/></svg>'+gap(6)+'<t-x class="w" w="118">Línea discontinua</t-x>'+gap(79)+'<div class="b" style="width:61px;height:30px"><i-c n="dash1"></i-c></div><div class="b" style="width:61px;height:30px"><i-c n="dash2"></i-c></div></div>'+
'<div class="r" style="margin-top:11px;padding-left:9px;gap:3.500px">'+['guión','hueco','guión','hueco','guión','hueco'].map(t=>`<div style="width:52.700px"><div class="f" style="width:52.700px;height:29px"></div><div style="display:flex;justify-content:center;margin-top:2px"><t-x w="${t==='guión'?37:42}">${t}</t-x></div></div>`).join('')+'</div>'+
'<div class="hr" style="margin-top:10px"></div>'+
row(11,28,'Puntas flecha:',97,cmb(82,24)+gap(17)+cmb(81,24)+gap(33)+'<i-c n="swap" w="21" h="18"></i-c>')+
row(18,28,'Escala:',47,('<div class="st"><i-c n="stepd" w="21" h="24"></i-c></div><div class="f" style="width:57px;border-left:0;padding-left:7px;color:#222;font-size:15px"><t-x w="38">100%</t-x></div>'+gap(17)).repeat(2)+gap(12)+'<i-c n="link" w="24" h="23"></i-c>')+
row(17,30,'Alinear:',51,'<div class="b" style="width:37px;height:30px"><i-c n="ar1" w="18" h="16"></i-c></div><div class="b" style="width:36px;height:30px"><i-c n="ar2" w="19" h="16"></i-c></div>')+
'<div class="hr" style="margin-top:9px"></div>'+
row(11,28,'Perfil:',39,cmb(159,24)+gap(17)+'<i-c n="flh" w="20" h="17"></i-c>'+gap(18)+'<i-c n="flv" w="18" h="21"></i-c>');});

def('layer-row',`:host{display:flex;align-items:center;height:32.300px;border-bottom:2px solid #2c2c2c;font-size:16px;color:#dedede;background:linear-gradient(90deg,transparent 31px,#2c2c2c 31px 33px,transparent 33px 63px,#2c2c2c 63px 65px,transparent 65px 73px,#2c2c2c 73px 74px,transparent 74px 311px,#2c2c2c 311px 313px,transparent 313px)}
:host([on]){background-color:#5b6474}.e{width:31px;display:flex;justify-content:center;padding-bottom:2px}.k{width:33px;display:flex;justify-content:center;padding-left:2px}
.c{width:5px;height:27px;margin:0 11px 0 2px}.t{margin:0 8px 0 14px}svg{display:block}.o{margin-left:auto;width:46px;height:100%;display:flex;align-items:center;position:relative}
.o svg{position:absolute;right:0;top:0}`,
el=>{const g=a=>el.getAttribute(a),th={a:'<path d="M3 9H6V12H4V17H8M16 9H20V17H16V12" fill="none" stroke="#f7f" stroke-width="2"/><path d="M20 9.500H27V17H20Z" fill="none" stroke="#f9f" stroke-width="1.500"/>',b:'<path d="M2 9H4V13H2ZM20 9H22V13H20Z" fill="#bbb"/>',c:'<path d="M2 9H6V20H2ZM23 9H27V17H23Z" fill="#7ff"/><path d="M3 12H5V16H3Z" fill="#fff"/>',d:'<path d="M10 2H20V11H10Z" fill="#00ff34"/><path d="M10 17H20V27H10Z" fill="#45d9ff"/>',e:'<path d="M2 10H27V18H2ZM14.500 10V18" fill="none" stroke="#bbb" stroke-width="1.500"/>'}[g('th')];
return `<div class="e"><i-c n="eye"></i-c></div><div class="k">${el.hasAttribute('lk')?'<i-c n="lock"></i-c>':''}</div><div class="c" style="background:${g('c')}"></div><i-c n="tri"></i-c><svg class="t" width="28" height="28"><path d="M1 1H27V27H1Z" fill="#fff" stroke="#000" stroke-width="2"/>${th}</svg><t-x w="${g('w')}"><slot></slot></t-x><div class="o"><i-c n="ring"></i-c>${el.hasAttribute('on')?'<svg width="9" height="8"><path d="M0 0H9V8Z" fill="#ddd"/></svg>':''}</div>`;});
def('layers-panel',`:host{height:610px;flex:none;background:#4a4a4a;padding:10px 8px 0 8px}.l{height:570px;border:1px solid #2a2a2a}
.f{display:flex;align-items:center;height:29px;color:#e0e0e0;font-size:16px}`,
`<div class="l"><layer-row c="#ff5050" th="a" w="48">auxiliar</layer-row><layer-row c="#ff5050" th="b" w="33">texto</layer-row><layer-row lk c="#ff50ff" th="c" w="113">texto_rectángulo</layer-row><layer-row on c="#5080ff" th="d" w="90">mapa/gráfico</layer-row><layer-row lk c="#5080ff" th="e" w="95">borde exterior</layer-row></div>
<div class="f"><t-x w="52">5 capas</t-x>${gap(103)}<i-c n="find"></i-c>${gap(20)}<i-c n="mask"></i-c>${gap(21)}<i-c n="subl"></i-c>${gap(20)}<i-c n="newl"></i-c>${gap(24)}<i-c n="trash"></i-c>${gap(26)}<i-c n="grip" style="margin-top:10px"></i-c></div>`);
def('color-panel',`:host{flex:1;background:#4a4a4a;padding:11px 8px 0}.r{display:flex;align-items:center;height:29px;font-size:16px}
.h{width:83px;height:29px;background:#a2a2a2;border:2px solid #2a2a2a;display:flex;align-items:center;padding-left:6px;color:#111}
.s{margin:11px 0 0 1px;width:348px;height:212px;border:2px solid #2a2a2a;background:linear-gradient(#fff,rgba(255,255,255,0) 50%,rgba(0,0,0,0) 50%,#000),linear-gradient(90deg,#f00,#ff0 17%,#0f0 33.300%,#0ff 50%,#00f 67%,#f0f 83.500%,#f00)}`,
`<div class="r"><svg width="61" height="22"><path d="M0 0H61V22H0Z" fill="#2a2a2a"/><path d="M1 2H20V20H1ZM41 2H60V20H41Z" fill="#fff"/><path d="M20 2H41V20H20Z"/><path d="M1 20L20 2" stroke="#f11" stroke-width="3"/></svg>${gap(188)}<t-x w="11" style="color:#e0e0e0">#</t-x>${gap(7)}<div class="h"><t-x w="43">0bff34</t-x></div></div><div class="s"></div>`);
def('side-dock',`:host{display:flex;flex:none;flex-direction:column;width:387px;border-left:4px solid #2a2a2a;background:#2a2a2a}
.h{height:17px;flex:none;background:linear-gradient(#383838,#303030);display:flex;align-items:center;justify-content:flex-end;padding-right:6px}.g{height:5px;flex:none;background:#262626;border-bottom:1px solid #555}`,
'<div class="h"><i-c n="ffwd"></i-c></div>'+tabs([['Trazo',72,7,40,2],['Degrad',62,11,49],['Transpa',61,9,50],['Alinear',62,10,50],['Buscatra',66,10,54]])+
'<stroke-panel></stroke-panel><div class="g"></div>'+tabs([['Mesas c',66,11,53],['Capas',63,10,39,1],['Enlaces',63,11,50],['Muestra',65,10,53],['Estilos g',66,10,54]])+
'<layers-panel></layers-panel><div class="g" style="height:4px"></div>'+tabs([['Color',72,7,39,2],['Párrafo',73,10,52],['OpenType',94,9,73],['Carácter',81,9,58]])+'<color-panel></color-panel>');

/* ---------- scroll + status ---------- */
def('v-scroll',`:host{width:25px;flex:none;background:#343434;border-left:2px solid #262626;display:flex;flex-direction:column;align-items:center;border-bottom:2px solid #262626}
i{width:23px;height:23px;background:#929292;outline:1px solid #262626;flex:none}`,
'<div style="height:9px"></div><i-c n="up" w="14" h="10"></i-c><div style="height:678px"></div><i></i><div style="flex:1"></div><i-c n="up" w="14" h="10" style="transform:scaleY(-1)"></i-c><div style="height:7px"></div>');
def('status-bar',`:host{display:flex;flex:none;height:24px;align-items:center;font-size:16px;background:#4a4a4a;border-top:1px solid #2a2a2a}
.f{height:22px;background:#a2a2a2;display:flex;align-items:center;color:#0c0c0c;padding-left:5px}.d{width:24px;height:22px;background:#555;border:1px solid #333;display:flex;align-items:center;justify-content:center}
.s{width:2px;height:22px;background:#333}.h{flex:1;height:23px;background:#343434;border-left:2px solid #262626;display:flex;align-items:center}.h i{width:23px;height:23px;background:#929292}.c{width:25px;height:23px;border-left:2px solid #262626}`,
gap(6)+'<div class="f" style="width:65px"><t-x w="52">66.67%</t-x></div><div class="d"><i-c n="down" w="10" h="9"></i-c></div>'+gap(11)+'<i-c n="first" w="14" h="13"></i-c>'+gap(17)+'<i-c n="leftdim" w="8" h="12"></i-c>'+gap(16)+'<div class="f" style="width:64px"><t-x w="7">1</t-x></div><div class="d" style="width:22px"><i-c n="down" w="10" h="9"></i-c></div>'+gap(16)+'<i-c n="right" w="10" h="13"></i-c>'+gap(14)+'<i-c n="last" w="14" h="13"></i-c>'+gap(11)+'<div class="s"></div>'+gap(121)+'<t-x w="63" style="color:#e0e0e0">Selección</t-x>'+gap(122)+'<div class="s"></div>'+gap(9)+'<i-c n="right" w="9" h="12"></i-c>'+gap(7)+'<div class="h">'+gap(8)+'<i-c n="left" w="10" h="14"></i-c>'+gap(943)+'<i></i><div style="flex:1"></div><i-c n="right" w="10" h="14"></i-c>'+gap(9)+'</div><div class="c"></div>');

def('app-window',`:host{position:relative;height:1584px;background:#4a4a4a;border:2px solid #060606;border-right-width:3px;border-radius:8px 8px 0 0}
.f{margin:0 4px 0 5px;height:1524px;border:2px solid #1f1f1f;border-left-width:1px;border-right-width:1px;display:flex;flex-direction:column}
.m{display:flex;flex:1;min-height:0;border-top:2px solid #222}.l{flex:1;display:flex;flex-direction:column;min-height:0}.c{display:flex;flex:1;min-height:0}`,
'<menu-bar></menu-bar><div class="f"><control-bar></control-bar><div class="m"><div class="l"><doc-tabs></doc-tabs><div class="c"><canvas-area></canvas-area><v-scroll></v-scroll></div><status-bar></status-bar></div><side-dock></side-dock></div></div><file-menu></file-menu>');

/* ---------- taskbar ---------- */
def('task-icon',`:host{width:95.400px;height:77px;display:flex;align-items:center;justify-content:center;flex:none}
:host([run]){background:linear-gradient(#76b9ed,#76b9ed) 50% 100%/79px 5px no-repeat}
:host([on]){background:linear-gradient(#76b9ed,#76b9ed) 50% 100%/100% 5px no-repeat,#4d4642}
.q{width:44px;height:42px;border:3px solid;display:flex;align-items:center;justify-content:center;font:bold 22px "Liberation Sans",sans-serif}`,
el=>{const t=el.getAttribute('t');return t?`<div class="q" style="color:${el.getAttribute('fc')};background:${el.getAttribute('bc')}"><t-x w="${t==='Id'?20:24}">${t}</t-x></div>`:`<i-c n="${el.getAttribute('n')}"></i-c>`;});
def('task-bar',`:host{display:flex;height:77px;background:#1f170f;color:#fff;font:22px "Open Sans","Noto Sans",sans-serif;align-items:center}
.tm{width:120px;display:flex;flex-direction:column;align-items:center;gap:9px}.nt{position:relative;width:46px;height:46px;margin-left:34px}
.bd{position:absolute;left:14px;top:14px;width:31px;height:32px;border-radius:50%;background:#3c3a38;border:1px solid #999;display:flex;align-items:center;justify-content:center;font-size:19px;font-weight:600}`,
'<div style="width:0;margin-left:-2px"></div>'+['win','tv','team','wa','fold*','cmd','rhino','droid','qgis'].map(n=>`<task-icon n="${n.replace('*','')}" ${n.includes('*')?'run':''}></task-icon>`).join('')+
'<task-icon t="Id" fc="#e6338f" bc="#3a0620"></task-icon><task-icon t="Ps" fc="#7cc0f4" bc="#0c0640"></task-icon><task-icon on t="Ai" fc="#f39c1f" bc="#2a1604"></task-icon>'+
['nx','blend','atom','bird','chrome*','spot*','note*','qgis*'].map(n=>`<task-icon n="${n.replace('*','')}" ${n.includes('*')?'run':''}></task-icon>`).join('')+
gap(444)+'<i-c n="ppl"></i-c>'+gap(43)+'<i-c n="chev"></i-c>'+gap(19)+'<i-c n="batt"></i-c>'+gap(16)+'<i-c n="cloud"></i-c>'+gap(18)+'<i-c n="wifi"></i-c>'+gap(17)+'<i-c n="vol"></i-c>'+gap(22)+'<t-x w="39">CAT</t-x>'+gap(28)+'<div class="tm"><t-x w="53">12:38</t-x><t-x w="117">05/07/2018</t-x></div><div class="nt"><i-c n="noti"></i-c><div class="bd"><t-x w="11">3</t-x></div></div><div style="width:1px;height:77px;background:#888;margin-left:auto;margin-right:7px"></div>');

def('title-banner',`:host{width:769px;height:138px;background:#0ff;display:flex;align-items:center;padding:0 0 9px 43px;color:#2d3e57;font:italic bold 101px "Open Sans","Noto Sans",sans-serif}`,'<t-x w="650">insertar mapa</t-x>');
def('page-sheet',`:host{width:3508px;height:2480px;border:2px solid #2d3e57;background:#fff;padding:102px 0 0 276px}.w{margin-top:168px;width:2953px;height:1661px;background:linear-gradient(#0a84e8 20px,#1f170f 20px)}`,'<title-banner></title-banner><div class="w"><app-window></app-window><task-bar></task-bar></div>');
</script>
</body>
</html>
